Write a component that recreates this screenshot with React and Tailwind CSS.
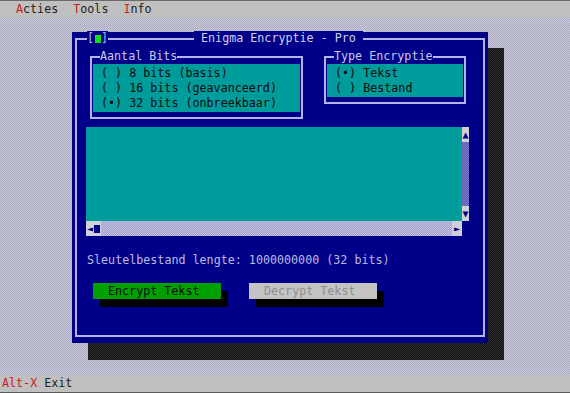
import React from "react";

const desk =
  "bg-[repeating-conic-gradient(#a6a6c2_0_25%,#cfcfda_0_50%)] bg-[length:2px_2px]";
const darkDither =
  "bg-[repeating-conic-gradient(#0c0c0c_0_25%,#343434_0_50%)] bg-[length:2px_2px]";
const vTrack =
  "bg-[repeating-conic-gradient(#5a5ab0_0_25%,#7c7cc8_0_50%)] bg-[length:2px_2px]";
const hTrack =
  "bg-[repeating-conic-gradient(#a0a0cc_0_25%,#c4c4e0_0_50%)] bg-[length:2px_2px]";

function MenuItem({ hot, rest }) {
  return (
    <span>
      <span className="text-[#c82020]">{hot}</span>
      <span className="text-[#222]">{rest}</span>
    </span>
  );
}

function Radio({ on, label }) {
  return (
    <div className="whitespace-pre">
      {on ? "(•)" : "( )"} {label}
    </div>
  );
}

function Group({ title, children, className }) {
  return (
    <fieldset
      className={`border-2 border-[#b4b4e6] px-[1px] pb-[5px] ${className}`}
    >
      <legend className="ml-[7px] leading-[15px] text-[#c8c8e6]">{title}</legend>
      <div className="bg-[#009c9c] text-[#0a0a0a] leading-[15px] pt-[2px] pb-[1px] pl-[8px]">
        {children}
      </div>
    </fieldset>
  );
}

function Button({ label, disabled }) {
  return (
    <div
      className={`w-[128px] h-[16px] leading-[16px] pl-[15px] whitespace-pre shadow-[7px_8px_0_#000] ${
        disabled ? "bg-[#c4c4c4] text-[#8e8e8e]" : "bg-[#00a000] text-[#0a0a0a]"
      }`}
    >
      {label}
    </div>
  );
}

export default function App() {
  return (
    <div className="w-[570px] h-[393px] flex flex-col overflow-hidden font-['DejaVu_Sans_Mono',monospace] text-[11.7px]">
      {/* menu bar */}
      <div className="h-[17px] bg-[#c0c0c0] border-t border-[#6a6a6a] flex items-center gap-[15px] pl-[16px] leading-[15px]">
        <MenuItem hot="A" rest="cties" />
        <MenuItem hot="T" rest="ools" />
        <MenuItem hot="I" rest="nfo" />
      </div>

      {/* desktop */}
      <div className={`flex-1 relative ${desk}`}>
        <div className={`absolute left-[88px] top-[31px] w-[416px] h-[312px] ${darkDither}`} />

        <div className="absolute left-[72px] top-[15px] w-[416px] h-[311px] bg-[#000088] pt-[6px] px-[3px] pb-[6px]">
          <div className="relative h-full border-2 border-[#b4b4e6] flex flex-col">
            {/* title line */}
            <div className="absolute left-[10px] top-[-9px] leading-[15px] bg-[#000088] text-[#b4b4e6] flex items-center whitespace-pre">
              [<span className="inline-block w-[6px] h-[8px] bg-[#10e010] mx-[0.5px]" />] 
            </div>
            <div className="absolute left-[117px] top-[-9px] leading-[15px] bg-[#000088] text-[#d0d0ee] whitespace-pre">
              {" Enigma Encryptie - Pro "}
            </div>

            {/* option groups */}
            <div className="flex items-start gap-[21px] ml-[13px] mt-[9px]">
              <Group title="Aantal Bits" className="w-[213px]">
                <Radio label="8 bits (basis)" />
                <Radio label="16 bits (geavanceerd)" />
                <Radio on label="32 bits (onbreekbaar)" />
              </Group>
              <Group title="Type Encryptie" className="w-[142px]">
                <Radio on label="Tekst" />
                <Radio label="Bestand" />
              </Group>
            </div>

            {/* memo */}
            <div className="ml-[9px] mt-[8px] w-[383px] flex flex-col">
              <div className="flex h-[94px]">
                <div className="flex-1 bg-[#009c9c]" />
                <div className="w-[7px] flex flex-col text-[#000088] text-[10px] leading-[15px] text-center">
                  <div className="h-[15px] bg-[#d0d0d8]">▲</div>
                  <div className={`flex-1 ${vTrack}`} />
                  <div className="h-[15px] bg-[#d0d0d8]">▼</div>
                </div>
              </div>
              <div className="flex h-[15px] text-[#000088] text-[10px] leading-[15px]">
                <div className="w-[376px] flex">
                  <div className="w-[15px] bg-[#d0d0d8] flex items-center">
                    <span className="w-[8px] text-center">◄</span>
                    <span className="w-[6px] h-[8px] bg-[#000088]" />
                  </div>
                  <div className={`flex-1 ${hTrack}`} />
                  <div className="w-[10px] bg-[#d0d0d8] text-center">►</div>
                </div>
              </div>
            </div>

            <div className="ml-[10px] mt-[17px] leading-[15px] text-[#bcbce4] whitespace-pre">
              Sleutelbestand lengte: 1000000000 (32 bits)
            </div>

            <div className="flex gap-[28px] ml-[16px] mt-[15px]">
              <Button label="Encrypt Tekst" />
              <Button label="Decrypt Tekst" disabled />
            </div>
          </div>
        </div>
      </div>

      {/* status bar */}
      <div className="h-[18px] bg-[#c0c0c0] border-b border-[#5a5a5a] flex items-center pl-[2px] leading-[15px] whitespace-pre">
        <span className="text-[#c82020]">Alt-X</span>
        <span className="text-[#222]"> Exit</span>
      </div>
    </div>
  );
}
